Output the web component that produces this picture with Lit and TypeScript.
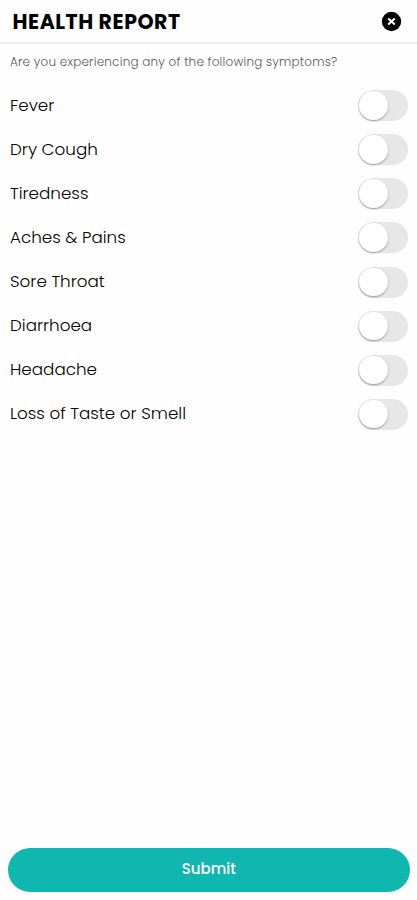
import { LitElement, html, css } from "lit";
import { customElement, property } from "lit/decorators.js";

const SYMPTOMS = [
  "Fever",
  "Dry Cough",
  "Tiredness",
  "Aches & Pains",
  "Sore Throat",
  "Diarrhoea",
  "Headache",
  "Loss of Taste or Smell",
];

@customElement("toggle-switch")
export class ToggleSwitch extends LitElement {
  static styles = css`
    :host { display: block; flex: none; }
    .track {
      box-sizing: border-box;
      width: 49.5px;
      height: 31px;
      padding: 1px;
      border-radius: 16px;
      background: #e7e7e7;
    }
    .thumb {
      width: 28.5px;
      height: 28.5px;
      border-radius: 50%;
      background: #fff;
      box-shadow: 0 1px 2px rgba(0, 0, 0, 0.35);
    }
  `;
  render() {
    return html`<div class="track" role="switch" aria-checked="false"><div class="thumb"></div></div>`;
  }
}

@customElement("symptom-row")
export class SymptomRow extends LitElement {
  @property() label = "";
  static styles = css`
    :host {
      display: flex;
      align-items: center;
      justify-content: space-between;
      height: 44.14px;
    }
    .label {
      font-size: 16.75px;
      font-weight: 300;
      line-height: 24px;
      color: #000;
      white-space: nowrap;
      padding-bottom: 2px;
    }
  `;
  render() {
    return html`
      <span class="label">${this.label}</span>
      <toggle-switch></toggle-switch>
    `;
  }
}

@customElement("app-root")
export class AppRoot extends LitElement {
  static styles = css`
    :host {
      display: flex;
      flex-direction: column;
      box-sizing: border-box;
      height: 900px;
      background: #fefefe;
      font-family: Poppins, Inter, sans-serif;
    }
    header {
      display: flex;
      align-items: center;
      justify-content: space-between;
      box-sizing: border-box;
      height: 44px;
      padding: 0 15px 0 12.5px;
      border-bottom: 2px solid #ededed;
    }
    h1 {
      margin: 0;
      padding-top: 2px;
      font-size: 20.5px;
      font-weight: 700;
      line-height: 28px;
      letter-spacing: 0.53px;
      color: #000;
      white-space: nowrap;
    }
    .close { display: block; width: 21px; height: 21px; padding-top: 1px; }
    .question {
      margin: 9px 0 0 10px;
      height: 18px;
      font-size: 12px;
      font-weight: 300;
      line-height: 18px;
      letter-spacing: 0.21px;
      color: #5a5a5a;
      white-space: nowrap;
    }
    .list { padding: 12.5px 9.5px 0 10px; }
    .submit {
      margin: auto 7px 8.5px 7.5px;
      height: 43.5px;
      border: 0;
      border-radius: 22px;
      padding: 0 0 1px;
      background: #0fb7b0;
      color: #fff;
      font: 500 15px/24px Poppins, Inter, sans-serif;
    }
  `;
  render() {
    return html`
      <header>
        <h1>HEALTH REPORT</h1>
        <svg class="close" viewBox="0 0 21 21" aria-label="Close">
          <circle cx="10.5" cy="10.5" r="9.7" fill="#000" />
          <path d="M7.2 7.4l6.6 6.2M13.8 7.4l-6.6 6.2" stroke="#fff" stroke-width="2" />
        </svg>
      </header>
      <p class="question">Are you experiencing any of the following symptoms?</p>
      <div class="list">
        ${SYMPTOMS.map((label) => html`<symptom-row .label=${label}></symptom-row>`)}
      </div>
      <button class="submit">Submit</button>
    `;
  }
}
